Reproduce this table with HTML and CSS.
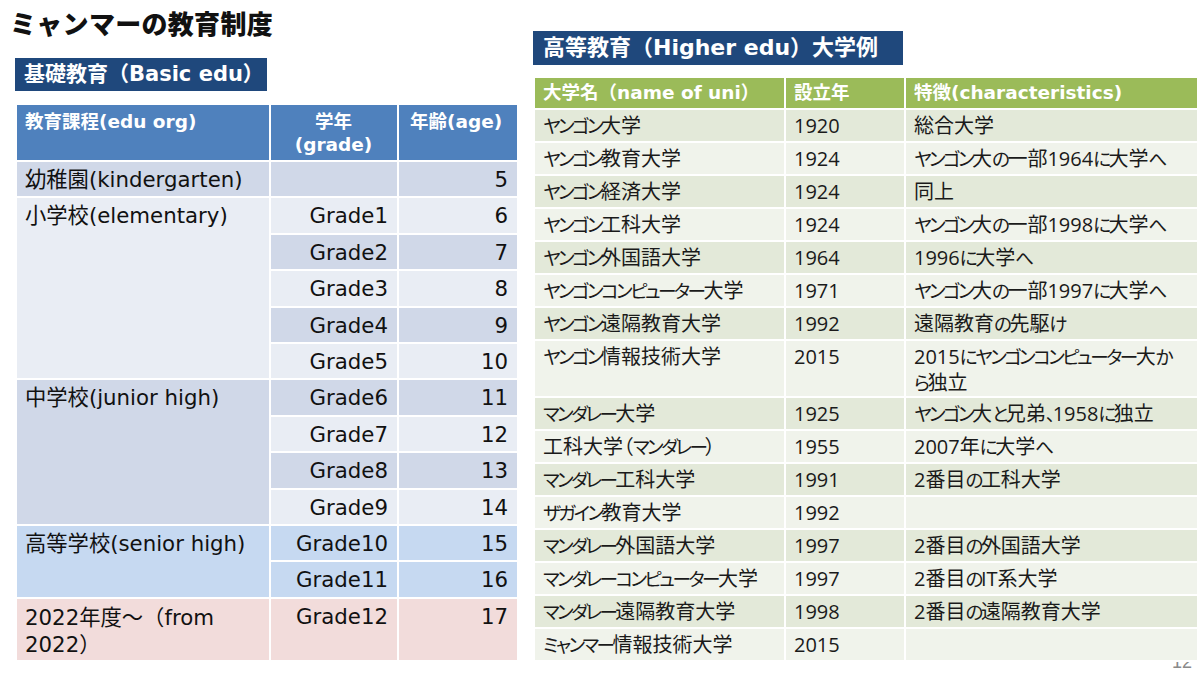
FILE: index.html
```html
<!DOCTYPE html>
<html lang="ja">
<head>
<meta charset="utf-8">
<title>ミャンマーの教育制度</title>
<link rel="stylesheet" href="styles.css">
</head>
<body>
<div class="page">
  <section class="col-left">
    <h1 class="title">ミャンマーの教育制度</h1>
    <div class="label label-left">基礎教育（Basic edu）</div>
    <table class="basic">
      <colgroup><col class="c1"><col class="c2"><col class="c3"></colgroup>
      <thead>
        <tr class="hrow">
          <th class="h-left">教育課程(edu org)</th>
          <th class="h-center">学年<br>(grade)</th>
          <th class="h-left h-age">年齢(age)</th>
        </tr>
      </thead>
      <tbody>
        <tr class="r"><td class="dk">幼稚園(kindergarten)</td><td class="dk num"></td><td class="dk num">5</td></tr>
        <tr class="r"><td class="lt" rowspan="5">小学校(elementary)</td><td class="lt num">Grade1</td><td class="lt num">6</td></tr>
        <tr class="r"><td class="dk num">Grade2</td><td class="dk num">7</td></tr>
        <tr class="r"><td class="lt num">Grade3</td><td class="lt num">8</td></tr>
        <tr class="r"><td class="dk num">Grade4</td><td class="dk num">9</td></tr>
        <tr class="r"><td class="lt num">Grade5</td><td class="lt num">10</td></tr>
        <tr class="r"><td class="dk" rowspan="4">中学校(junior high)</td><td class="dk num">Grade6</td><td class="dk num">11</td></tr>
        <tr class="r"><td class="lt num">Grade7</td><td class="lt num">12</td></tr>
        <tr class="r"><td class="dk num">Grade8</td><td class="dk num">13</td></tr>
        <tr class="r"><td class="lt num">Grade9</td><td class="lt num">14</td></tr>
        <tr class="r"><td class="bl" rowspan="2">高等学校(senior high)</td><td class="bl num">Grade10</td><td class="bl num">15</td></tr>
        <tr class="r"><td class="bl num">Grade11</td><td class="bl num">16</td></tr>
        <tr class="rlast"><td class="pk two">2022年度～（from<br>2022）</td><td class="pk num">Grade12</td><td class="pk num">17</td></tr>
      </tbody>
    </table>
  </section>

  <section class="col-right">
    <div class="label label-right">高等教育（Higher edu）大学例</div>
    <table class="higher">
      <colgroup><col class="d1"><col class="d2"><col class="d3"></colgroup>
      <thead>
        <tr class="ghead"><th>大学名（name of uni）</th><th>設立年</th><th>特徴(characteristics)</th></tr>
      </thead>
      <tbody>
        <tr class="g odd"><td><span class="k">ヤンゴン</span>大学</td><td>1920</td><td>総合大学</td></tr>
        <tr class="g"><td><span class="k">ヤンゴン</span>教育大学</td><td>1924</td><td><span class="k">ヤンゴン</span>大<span class="k">の</span>一部1964<span class="k">に</span>大学<span class="k">へ</span></td></tr>
        <tr class="g odd"><td><span class="k">ヤンゴン</span>経済大学</td><td>1924</td><td>同上</td></tr>
        <tr class="g"><td><span class="k">ヤンゴン</span>工科大学</td><td>1924</td><td><span class="k">ヤンゴン</span>大<span class="k">の</span>一部1998<span class="k">に</span>大学<span class="k">へ</span></td></tr>
        <tr class="g odd"><td><span class="k">ヤンゴン</span>外国語大学</td><td>1964</td><td>1996<span class="k">に</span>大学<span class="k">へ</span></td></tr>
        <tr class="g"><td><span class="k">ヤンゴンコンピューター</span>大学</td><td>1971</td><td><span class="k">ヤンゴン</span>大<span class="k">の</span>一部1997<span class="k">に</span>大学<span class="k">へ</span></td></tr>
        <tr class="g odd"><td><span class="k">ヤンゴン</span>遠隔教育大学</td><td>1992</td><td>遠隔教育<span class="k">の</span>先駆<span class="k">け</span></td></tr>
        <tr class="g gtall"><td><span class="k">ヤンゴン</span>情報技術大学</td><td>2015</td><td>2015<span class="k">にヤンゴンコンピューター</span>大<span class="k">か</span><br><span class="k">ら</span>独立</td></tr>
        <tr class="g odd"><td><span class="k">マンダレー</span>大学</td><td>1925</td><td><span class="k">ヤンゴン</span>大<span class="k">と</span>兄弟<span class="k">、</span>1958<span class="k">に</span>独立</td></tr>
        <tr class="g"><td>工科大学（<span class="k">マンダレー</span>）</td><td>1955</td><td>2007年<span class="k">に</span>大学<span class="k">へ</span></td></tr>
        <tr class="g odd"><td><span class="k">マンダレー</span>工科大学</td><td>1991</td><td>2番目<span class="k">の</span>工科大学</td></tr>
        <tr class="g"><td><span class="k">ザガイン</span>教育大学</td><td>1992</td><td></td></tr>
        <tr class="g odd"><td><span class="k">マンダレー</span>外国語大学</td><td>1997</td><td>2番目<span class="k">の</span>外国語大学</td></tr>
        <tr class="g"><td><span class="k">マンダレーコンピューター</span>大学</td><td>1997</td><td>2番目<span class="k">の</span>IT系大学</td></tr>
        <tr class="g odd"><td><span class="k">マンダレー</span>遠隔教育大学</td><td>1998</td><td>2番目<span class="k">の</span>遠隔教育大学</td></tr>
        <tr class="g"><td><span class="k">ミャンマー</span>情報技術大学</td><td>2015</td><td></td></tr>
      </tbody>
    </table>
  </section>
</div>
<div class="pagenum">12</div>
</body>
</html>
```

FILE: styles.css
```css
html, body {
  margin: 0;
  padding: 0;
  background: #ffffff;
}
body {
  width: 1200px;
  height: 675px;
  overflow: hidden;
  position: relative;
  font-family: "DejaVu Sans", "Noto Sans CJK JP", sans-serif;
  color: #111;
}
.page {
  display: flex;
  gap: 16px;
  padding-left: 15px;
}
.col-left {
  width: 502px;
  display: flex;
  flex-direction: column;
  align-items: flex-start;
}
.col-right {
  width: 664px;
  padding-top: 31px;
  display: flex;
  flex-direction: column;
  align-items: flex-start;
}
.title {
  margin: 8px 0 0 -5px;
  font-family: "Noto Sans CJK JP", sans-serif;
  font-weight: 900;
  font-size: 26px;
  line-height: 30px;
  height: 30px;
  color: #111;
  letter-spacing: 0.3px;
}
.label {
  background: #1f487c;
  color: #fff;
  font-weight: 700;
  box-sizing: border-box;
  white-space: nowrap;
  font-family: "DejaVu Sans", "Noto Sans CJK JP", sans-serif;
}
.label-left {
  margin-top: 20px;
  width: 252px;
  height: 33px;
  line-height: 33px;
  padding-left: 9px;
  font-size: 21px;
}
.label-right {
  width: 370px;
  height: 34px;
  line-height: 34px;
  padding-left: 10px;
  font-size: 22px;
}

/* ---------- Left table ---------- */
table {
  border-collapse: collapse;
  table-layout: fixed;
  position: relative;
  z-index: 1;
}
.basic {
  margin-top: 12px;
  width: 502px;
  font-size: 21.3px;
}
.basic .c1 { width: 254px; }
.basic .c2 { width: 128px; }
.basic .c3 { width: 120px; }
.basic th, .basic td {
  border: 2px solid #fff;
  vertical-align: top;
  padding: 5px 9px 0 8px;
  line-height: 26px;
  white-space: nowrap;
}
.basic th {
  background: #4f81bd;
  color: #fff;
  font-size: 18.5px;
  font-weight: 700;
  line-height: 23px;
  padding-top: 5px;
}
.hrow { height: 57px; }
.h-left { text-align: left; }
.h-center { text-align: center; }
.basic .h-age { padding-left: 11px; padding-right: 2px; }
.r { height: 36.4px; }
.rlast { height: 63px; }
.basic .num { text-align: right; }
.basic .two { line-height: 27px; padding-top: 5px; }
.dk { background: #d0d8e8; }
.lt { background: #e9edf4; }
.bl { background: #c6d9f1; }
.pk { background: #f2dcdb; }

/* ---------- Right table ---------- */
.higher {
  margin-top: 11px;
  width: 664px;
  font-size: 20px;
  font-family: "Open Sans", "Noto Sans CJK JP", sans-serif;
  font-feature-settings: "palt" 1;
  color: #1a1a1a;
}
.higher .d1 { width: 251px; }
.higher .d2 { width: 120px; }
.higher .d3 { width: 293px; }
.higher th, .higher td {
  border: 2px solid #fff;
  text-align: left;
  vertical-align: top;
  white-space: nowrap;
  padding: 3px 4px 0 8px;
  line-height: 26px;
}
.higher th {
  background: #9bbb59;
  color: #fff;
  font-family: "DejaVu Sans", "Noto Sans CJK JP", sans-serif;
  font-weight: 700;
  font-size: 18.5px;
  padding-top: 2px;
  font-feature-settings: normal;
}
.higher .k {
  font-size: 18.6px;
  letter-spacing: -2.5px;
}
.ghead { height: 32px; }
.g { height: 33px; background: #f0f3eb; }
.g.odd { background: #e3e9d9; }
.gtall { height: 56px; }

.pagenum {
  position: absolute;
  left: 1172px;
  top: 652px;
  font-family: "Liberation Sans", sans-serif;
  font-size: 18px;
  line-height: 20px;
  color: #8a8a8a;
  z-index: 0;
}
```
